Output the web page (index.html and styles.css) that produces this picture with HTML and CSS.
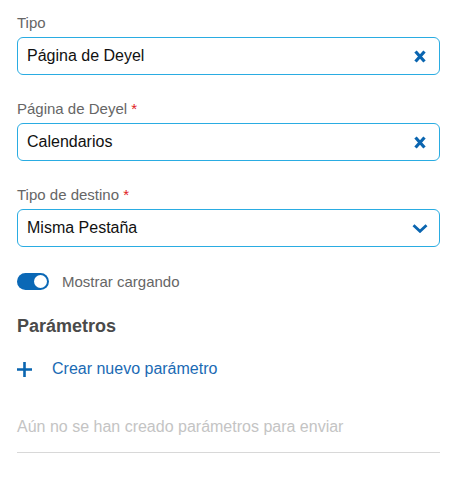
FILE: index.html
```html
<!DOCTYPE html>
<html lang="es">
<head>
<meta charset="utf-8">
<link rel="stylesheet" href="styles.css">
</head>
<body>
<div class="panel">
  <div class="field">
    <div class="label">Tipo</div>
    <div class="input">
      <span class="value">Página de Deyel</span>
      <svg class="icon-x" width="12" height="13" viewBox="0 0 12 13"><path d="M1.5 1.5 L10.5 11.5 M10.5 1.5 L1.5 11.5" stroke="#0a65b0" stroke-width="3.2" fill="none"/></svg>
    </div>
  </div>
  <div class="field">
    <div class="label">Página de Deyel <span class="req">*</span></div>
    <div class="input">
      <span class="value">Calendarios</span>
      <svg class="icon-x" width="12" height="13" viewBox="0 0 12 13"><path d="M1.5 1.5 L10.5 11.5 M10.5 1.5 L1.5 11.5" stroke="#0a65b0" stroke-width="3.2" fill="none"/></svg>
    </div>
  </div>
  <div class="field">
    <div class="label">Tipo de destino <span class="req">*</span></div>
    <div class="input">
      <span class="value">Misma Pestaña</span>
      <svg class="icon-chev" width="16" height="9" viewBox="0 0 16 9"><path d="M1.5 1.2 L8 7.3 L14.5 1.2" stroke="#0a65b0" stroke-width="2.8" fill="none"/></svg>
    </div>
  </div>
  <div class="toggle-row">
    <span class="toggle"><span class="knob"></span></span>
    <span class="toggle-label">Mostrar cargando</span>
  </div>
  <h2 class="section-title">Parámetros</h2>
  <div class="add-row">
    <svg class="icon-plus" width="15" height="15" viewBox="0 0 15 15"><path d="M7.5 0 V15 M0 7.5 H15" stroke="#0a65b0" stroke-width="2.6" fill="none"/></svg>
    <span class="add-label">Crear nuevo parámetro</span>
  </div>
  <div class="empty">Aún no se han creado parámetros para enviar</div>
  <div class="divider"></div>
</div>
</body>
</html>
```
FILE: styles.css
```css
* { box-sizing: border-box; }
html, body { margin: 0; padding: 0; background: #fff; }
body { font-family: "Liberation Sans", Arial, sans-serif; }
.panel { padding: 13px 17px 0 17px; width: 457px; }
.field { margin-bottom: 24px; }
.label { font-size: 15px; line-height: 20px; color: #666; margin-bottom: 4px; }
.req { color: #e0201c; }
.input {
  height: 38px;
  border: 1px solid #2aace2;
  border-radius: 6px;
  display: flex;
  align-items: center;
  justify-content: space-between;
  padding: 0 12px 0 9px;
}
.value { font-size: 16px; color: #111; }
.icon-x { margin-right: 1px; }
.icon-chev { margin-right: -1px; }
.toggle-row { display: flex; align-items: center; height: 20px; margin-top: 5px; }
.toggle {
  width: 32px; height: 17px; border-radius: 9px; background: #0a68b6;
  display: flex; align-items: center; justify-content: flex-end; padding-right: 2px;
}
.knob { width: 13px; height: 13px; border-radius: 50%; background: #fff; }
.toggle-label { font-size: 15px; color: #666; margin-left: 13px; }
.section-title { font-size: 18px; line-height: 24px; font-weight: bold; color: #4a4a4a; margin: 23px 0 20px 0; }
.add-row { display: flex; align-items: center; height: 22px; }
.icon-plus { margin-right: 20px; margin-top: 1px; }
.add-label { font-size: 16px; color: #1a6ab4; line-height: 22px; }
.empty { font-size: 16px; line-height: 22px; color: #c4c4c4; margin-top: 36px; }
.divider { height: 1px; background: #d8d8d8; margin-top: 14px; }
```
